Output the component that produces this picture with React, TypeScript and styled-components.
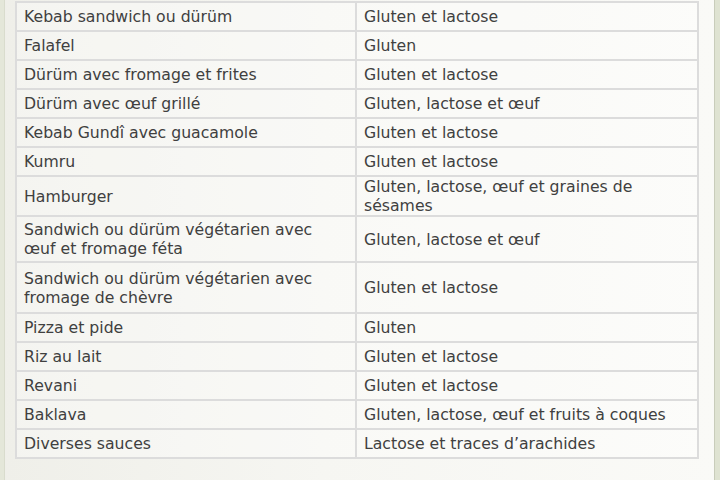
import styled, { createGlobalStyle } from "styled-components";

const GlobalStyle = createGlobalStyle`
  html, body {
    margin: 0;
    padding: 0;
    background: #eeeee8;
  }
  body {
    font-family: "DejaVu Sans", "Liberation Sans", sans-serif;
  }
`;

const Page = styled.div`
  width: 720px;
  height: 480px;
  box-sizing: border-box;
  display: flex;
  overflow: hidden;
`;

const LeftRail = styled.div`
  width: 4px;
  flex: none;
  background: #e4e7d9;
  border-right: 1px solid #d9dccd;
`;

const Content = styled.div`
  flex: 1;
  padding: 1px 14px 0 10px;
  background: linear-gradient(90deg, #efefe9 0%, #f6f6f2 45%, #fafaf7 100%);
`;

const RightRail = styled.div`
  width: 5px;
  flex: none;
  background: #dfe3d2;
  border-left: 1px solid #c9cdbb;
`;

const Table = styled.table`
  width: 684px;
  border-collapse: collapse;
  table-layout: fixed;
  font-size: 15.7px;
  line-height: 19px;
  color: #404040;
  background: rgba(255, 255, 255, 0.35);
`;

const Row = styled.tr<{ $h?: number }>`
  height: ${({ $h }) => $h ?? 29}px;
`;

const Cell = styled.td`
  border: 2px solid #dcdcdc;
  padding: 0 7px;
  vertical-align: middle;
  &:first-child {
    width: 324px;
  }
`;

const rows: { food: string; allergens: string; h?: number }[] = [
  { food: "Kebab sandwich ou dürüm", allergens: "Gluten et lactose" },
  { food: "Falafel", allergens: "Gluten" },
  { food: "Dürüm avec fromage et frites", allergens: "Gluten et lactose" },
  { food: "Dürüm avec œuf grillé", allergens: "Gluten, lactose et œuf" },
  { food: "Kebab Gundî avec guacamole", allergens: "Gluten et lactose" },
  { food: "Kumru", allergens: "Gluten et lactose" },
  {
    food: "Hamburger",
    allergens: "Gluten, lactose, œuf et graines de sésames",
    h: 39,
  },
  {
    food: "Sandwich ou dürüm végétarien avec œuf et fromage féta",
    allergens: "Gluten, lactose et œuf",
    h: 46,
  },
  {
    food: "Sandwich ou dürüm végétarien avec fromage de chèvre",
    allergens: "Gluten et lactose",
    h: 51,
  },
  { food: "Pizza et pide", allergens: "Gluten" },
  { food: "Riz au lait", allergens: "Gluten et lactose" },
  { food: "Revani", allergens: "Gluten et lactose" },
  { food: "Baklava", allergens: "Gluten, lactose, œuf et fruits à coques" },
  { food: "Diverses sauces", allergens: "Lactose et traces d’arachides" },
];

export default function App() {
  return (
    <>
      <GlobalStyle />
      <Page>
        <LeftRail />
        <Content>
          <Table>
            <tbody>
              {rows.map((r) => (
                <Row key={r.food} $h={r.h}>
                  <Cell>{r.food}</Cell>
                  <Cell>{r.allergens}</Cell>
                </Row>
              ))}
            </tbody>
          </Table>
        </Content>
        <RightRail />
      </Page>
    </>
  );
}
